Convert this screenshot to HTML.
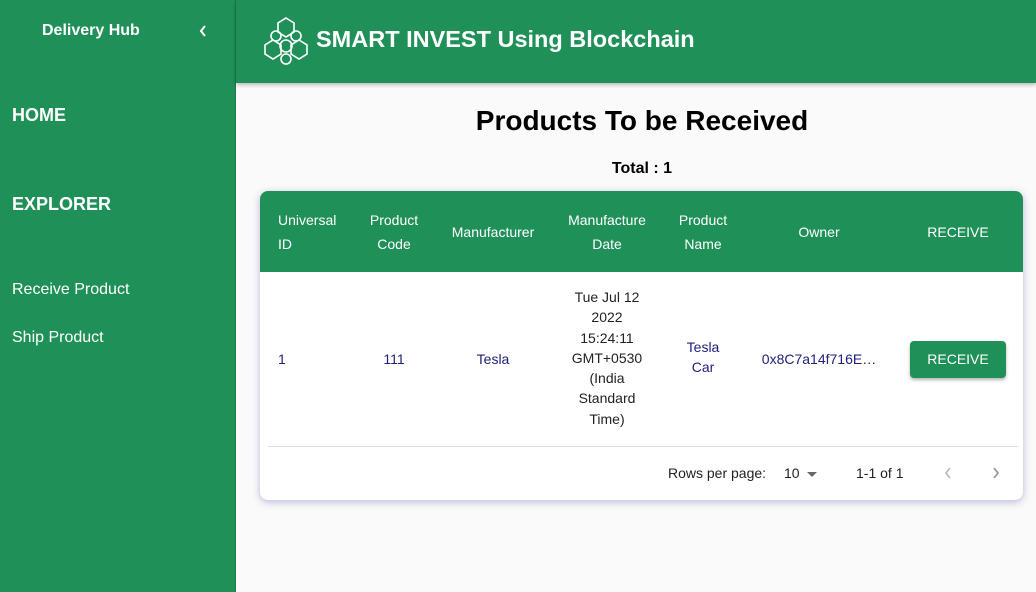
<!DOCTYPE html>
<html><head><style>
*{margin:0;padding:0;box-sizing:border-box}
body{width:1036px;height:592px;overflow:hidden;font-family:"Liberation Sans",Arial,sans-serif;background:#fafafa;position:relative}
.side{position:absolute;left:0;top:0;width:236px;height:592px;background:#209059;color:#fff;border-right:1px solid #1a7a4a}
.side .t{position:absolute;left:42px;top:22px;font-weight:bold;font-size:16px}
.side .big{position:absolute;left:12px;font-weight:bold;font-size:18px}
.side .sm{position:absolute;left:12px;font-size:16px}
.hdr{position:absolute;left:236px;top:0;width:800px;height:83px;background:#209059;box-shadow:0 2px 4px rgba(0,0,0,.25)}
.hdr .tt{position:absolute;left:80px;top:26px;color:#fff;font-weight:bold;font-size:23.5px}
h1{position:absolute;left:236px;width:812px;text-align:center;top:105px;font-size:28px;color:#000}
.tot{position:absolute;left:236px;width:812px;text-align:center;top:160px;font-size:16px;font-weight:bold}
.card{position:absolute;left:260px;top:191px;width:763px;height:309px;background:#fff;border-radius:8px;box-shadow:0 2px 8px rgba(60,60,160,.35);overflow:hidden}
.th{position:absolute;top:0;left:0;width:763px;height:81px;background:#209059}
.c{position:absolute;text-align:center;font-size:14px;line-height:24px;transform:translateX(-50%)}
.th .c{color:#fff}
.d{color:#22207a}
.btn{position:absolute;left:650px;top:150px;width:96px;height:37px;background:#209059;color:#fff;border-radius:4px;font-size:14px;text-align:center;line-height:37px;box-shadow:0 2px 3px rgba(0,0,0,.3)}
.sep{position:absolute;left:8px;top:255px;width:750px;height:1px;background:#e0e0e0}
.ft{position:absolute;top:274px;font-size:14px;color:#222}
</style></head><body>
<div class="side">
<div class="t">Delivery Hub</div>
<svg style="position:absolute;left:198px;top:24px" width="10" height="14" viewBox="0 0 10 14"><path d="M7 2 L3 7 L7 12" stroke="#fff" stroke-width="2" fill="none"/></svg>
<div class="big" style="top:105px">HOME</div>
<div class="big" style="top:194px">EXPLORER</div>
<div class="sm" style="top:281px">Receive Product</div>
<div class="sm" style="top:329px">Ship Product</div>
</div>
<div class="hdr">
<svg style="position:absolute;left:24px;top:16px" width="52" height="50" viewBox="0 0 52 50" fill="none" stroke="#fff" stroke-width="1.6">
<polygon points="26,2 34,7 34,16 26,21 18,16 18,7"/>
<polygon points="13,24 21,29 21,38 13,43 5,38 5,29"/>
<polygon points="39,24 47,29 47,38 39,43 31,38 31,29"/>
<circle cx="26" cy="30" r="6"/><circle cx="16" cy="20" r="5"/><circle cx="36" cy="20" r="5"/>
<circle cx="26" cy="43" r="5"/>
</svg>
<div class="tt">SMART INVEST Using Blockchain</div>
</div>
<h1>Products To be Received</h1>
<div class="tot">Total : 1</div>
<div class="card">
<div class="th">
<div class="c" style="top:17px;text-align:left;transform:none;left:18px">Universal<br>ID</div>
<div class="c" style="left:134px;top:17px">Product<br>Code</div>
<div class="c" style="left:233px;top:29px">Manufacturer</div>
<div class="c" style="left:347px;top:17px">Manufacture<br>Date</div>
<div class="c" style="left:443px;top:17px">Product<br>Name</div>
<div class="c" style="left:559px;top:29px">Owner</div>
<div class="c" style="left:698px;top:29px">RECEIVE</div>
</div>
<div class="c d" style="left:18px;transform:none;top:156px">1</div>
<div class="c d" style="left:134px;top:156px">111</div>
<div class="c d" style="left:233px;top:156px">Tesla</div>
<div class="c" style="left:347px;top:96px;line-height:20.3px;color:#222">Tue Jul 12<br>2022<br>15:24:11<br>GMT+0530<br>(India<br>Standard<br>Time)</div>
<div class="c d" style="left:443px;top:146px;line-height:20px">Tesla<br>Car</div>
<div class="c d" style="left:559px;top:156px">0x8C7a14f716E…</div>
<div class="btn">RECEIVE</div>
<div class="sep"></div>
<div class="ft" style="left:408px">Rows per page:</div>
<div class="ft" style="left:524px">10</div>
<svg style="position:absolute;left:546px;top:279px" width="12" height="8" viewBox="0 0 12 8"><path d="M1 2 L11 2 L6 7Z" fill="#666"/></svg>
<div class="ft" style="left:596px">1-1 of 1</div>
<svg style="position:absolute;left:682px;top:274px" width="12" height="16" viewBox="0 0 12 16"><path d="M8 3 L4 8 L8 13" stroke="#bbb" stroke-width="1.8" fill="none"/></svg>
<svg style="position:absolute;left:730px;top:274px" width="12" height="16" viewBox="0 0 12 16"><path d="M4 3 L8 8 L4 13" stroke="#999" stroke-width="1.8" fill="none"/></svg>
</div>
</body></html>
